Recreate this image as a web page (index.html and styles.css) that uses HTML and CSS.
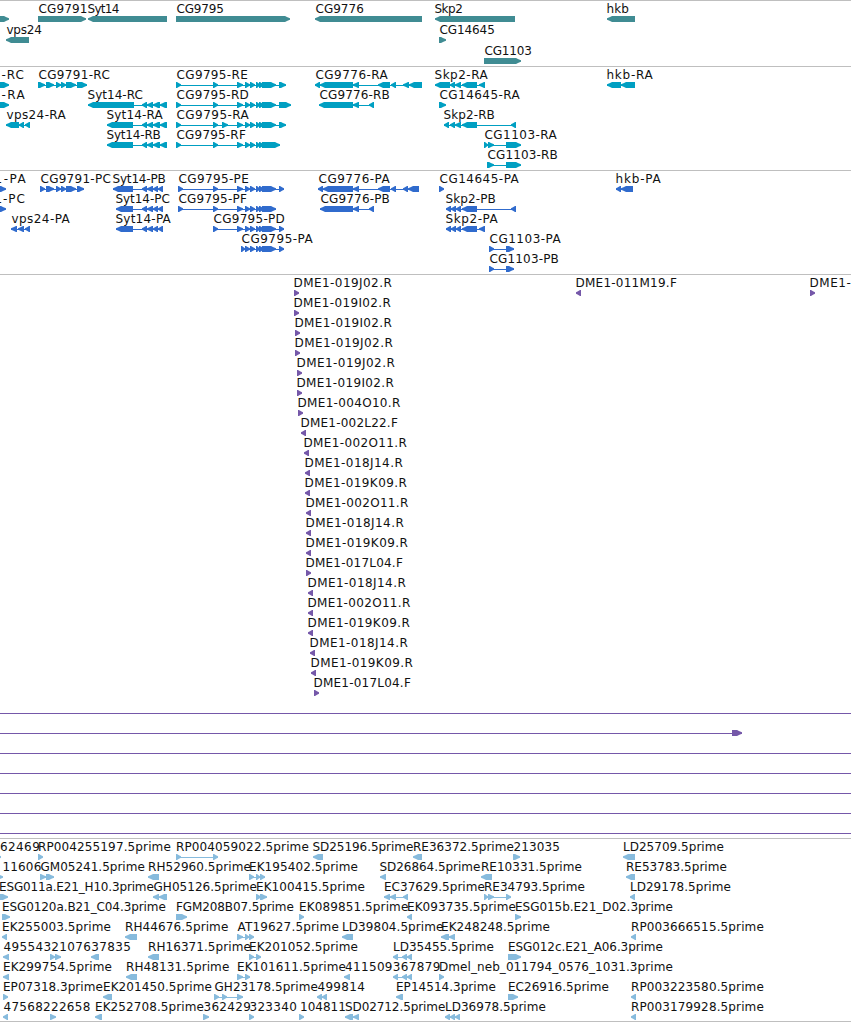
FILE: index.html
```html
<!DOCTYPE html>
<html lang="en">
<head>
    <meta charset="UTF-8">
    <title>Genome Browser</title>
    <link rel="stylesheet" href="styles.css">
</head>
<body>

    <div id="browser">
        <div class="track"><svg id="genes" class="genes" width="851" height="65"></svg></div>
        <div class="track"><svg id="transcripts" class="transcripts" width="851" height="103"></svg></div>
        <div class="track"><svg id="proteins" class="proteins" width="851" height="103"></svg></div>
        <div class="track"><svg id="clones" class="clones" width="851" height="563"></svg></div>
        <div class="track last"><svg id="ests" class="ests" width="851" height="182"></svg></div>
    </div>

    <script src="script.js"></script>
</body>
</html>
```
FILE: styles.css
```css
body { margin: 0; background: #fff; overflow: hidden; }
#browser { width: 851px; }
.track { border-top: 1px solid #bfbfbf; }
.track.last { border-bottom: 1px solid #bfbfbf; }
.track svg { display: block; overflow: hidden; }
.label { font-family: "DejaVu Sans", sans-serif; font-size: 12px; fill: #111; }
.genes { color: #408c93; }
.transcripts { color: #009fc2; }
.proteins { color: #306bcd; }
.clones { color: #7558a9; }
.ests { color: #87bbdd; }
.exon, .intron { fill: currentColor; }
```
FILE: script.js
```js
const NS = "http://www.w3.org/2000/svg";

// exon blocks shared by several isoforms
const cg9795 = "237-243 245-250 250-255 256-260 259-264 ";
const syt14 = " 142-147 147-153 153-160 160-167";
const syt14p = " 142-147 147-153 153-158 158-163";

// row, label, label start, label end, strand, blocks
const genes = [
    [0, "", 0, 0, "+", "-10-9"],
    [0, "CG9791", 38, 87.5, "+", "38-86"],
    [0, "Syt14", 87, 119.5, "-", "88-167"],
    [0, "CG9795", 176, 224, "+", "176-290"],
    [0, "CG9776", 315, 364, "-", "315-422"],
    [0, "Skp2", 434, 463, "-", "435-515"],
    [0, "hkb", 606, 629, "-", "607-635"],
    [1, "vps24", 6, 42, "-", "6-29"],
    [1, "CG14645", 439, 495, "+", "439-446"],
    [2, "CG1103", 484, 532, "+", "484-521"]
];

const transcripts = [
    [0, "-RC", 1, 24, "+", "-10-9"],
    [0, "CG9791-RC", 38, 110, "+", "38-45 46-54 56-61 61-66 66-76 77-87"],
    [0, "CG9795-RE", 176, 248, "+", "176-181 213-218 " + cg9795 + "262-276 279-286"],
    [0, "CG9776-RA", 315, 388, "-", "315-320 320-353 353-359 378-390 391-396 403-409 409-422"],
    [0, "Skp2-RA", 434, 488, "-", "435-450 450-455 455-461 462-477 479-485"],
    [0, "hkb-RA", 606, 653, "-", "607-621 621-635"],
    [1, "-RA", 1, 25, "+", "-10-9"],
    [1, "Syt14-RC", 87, 143, "-", "88-134" + syt14],
    [1, "CG9795-RD", 176, 249, "+", "176-181 213-218 " + cg9795 + "262-276 279-291"],
    [1, "CG9776-RB", 319, 390, "-", "319-353 353-359 369-374"],
    [1, "CG14645-RA", 439, 520, "+", "439-446"],
    [2, "vps24-RA", 6, 66, "-", "6-19 19-24 25-30"],
    [2, "Syt14-RA", 106, 163, "-", "107-133" + syt14],
    [2, "CG9795-RA", 176, 249, "+", "176-181 213-218 222-228 " + cg9795 + "262-276 279-286"],
    [2, "Skp2-RB", 443, 495, "-", "444-449 450-455 455-461 462-477 511-516"],
    [3, "Syt14-RB", 106, 161, "-", "107-133" + syt14],
    [3, "CG9795-RF", 176, 246, "+", "176-181 213-218 " + cg9795 + "262-280"],
    [3, "CG1103-RA", 484, 557, "+", "484-488 488-494 506-521"],
    [4, "CG1103-RB", 487, 558, "+", "487-494 506-521"]
];

const proteins = [
    [0, "1-PA", -6, 26, "+", "-10-6"],
    [0, "CG9791-PC", 40, 111, "+", "40-45 46-54 56-61 61-66 66-76 77-84"],
    [0, "Syt14-PB", 112, 166, "-", "113-133" + syt14p],
    [0, "CG9795-PE", 178, 249, "+", "178-183 213-218 " + cg9795 + "262-276 279-284"],
    [0, "CG9776-PA", 318, 390, "-", "318-323 323-353 353-359 378-390 391-396 403-408 408-419"],
    [0, "CG14645-PA", 439, 519, "+", "439-444"],
    [0, "hkb-PA", 615, 661, "-", "616-621 621-633"],
    [1, "1-PC", -6, 25, "+", "-10-6"],
    [1, "Syt14-PC", 115, 170, "-", "116-133" + syt14p],
    [1, "CG9795-PF", 178, 247, "+", "178-183 213-218 " + cg9795 + "262-276"],
    [1, "CG9776-PB", 320, 390, "-", "320-353 353-359 369-374"],
    [1, "Skp2-PB", 445, 496, "-", "446-451 451-456 456-461 462-477 511-516"],
    [2, "vps24-PA", 11, 70, "-", "11-17 18-24 25-30"],
    [2, "Syt14-PA", 115, 171, "-", "116-133" + syt14p],
    [2, "CG9795-PD", 213, 285, "+", "213-218 " + cg9795 + "262-276 279-284"],
    [2, "Skp2-PA", 445, 498, "-", "446-451 451-456 456-461 462-477 479-485"],
    [3, "CG9795-PA", 241, 313, "+", "241-245 245-250 250-255 256-260 259-264 262-276 279-284"],
    [3, "CG1103-PA", 489, 561, "+", "489-494 506-514"],
    [4, "CG1103-PB", 489, 559, "+", "489-494 506-514"]
];

const clones = [
    [0, "DME1-019J02.R", 293, 392, "+", "294-299"],
    [0, "DME1-011M19.F", 575, 677, "-", "576-581"],
    [0, "DME1-", 809, 851, "+", "810-815"],
    [1, "DME1-019I02.R", 293, 391, "+", "294-299"],
    [2, "DME1-019I02.R", 294, 392, "+", "295-300"],
    [3, "DME1-019J02.R", 294, 393, "+", "295-300"],
    [4, "DME1-019J02.R", 296, 395, "+", "297-302"],
    [5, "DME1-019I02.R", 296, 394, "+", "297-302"],
    [6, "DME1-004O10.R", 297, 400.5, "+", "298-303"],
    [7, "DME1-002L22.F", 300, 398, "-", "301-306"],
    [8, "DME1-002O11.R", 303, 407, "-", "304-309"],
    [9, "DME1-018J14.R", 304, 403, "-", "305-310"],
    [10, "DME1-019K09.R", 304, 407, "-", "305-310"],
    [11, "DME1-002O11.R", 305, 408.5, "-", "306-311"],
    [12, "DME1-018J14.R", 305, 404, "-", "306-311"],
    [13, "DME1-019K09.R", 305, 408, "-", "306-311"],
    [14, "DME1-017L04.F", 305, 403, "+", "306-311"],
    [15, "DME1-018J14.R", 307, 406, "-", "308-313"],
    [16, "DME1-002O11.R", 307, 410.5, "-", "308-313"],
    [17, "DME1-019K09.R", 307, 410, "-", "308-313"],
    [18, "DME1-018J14.R", 309, 408, "-", "310-315"],
    [19, "DME1-019K09.R", 310, 413, "-", "311-316"],
    [20, "DME1-017L04.F", 313, 411, "+", "314-319"],
    [21, "", 0, 0, "+", "-10--5 860-870"],
    [22, "", 0, 0, "+", "-10--5 732-742"],
    [23, "", 0, 0, "+", "-10--5 860-870"],
    [24, "", 0, 0, "+", "-10--5 860-870"],
    [25, "", 0, 0, "+", "-10--5 860-870"],
    [26, "", 0, 0, "+", "-10--5 860-870"],
    [27, "", 0, 0, "+", "-10--5 860-870"]
];

const ests = [
    [0, "62469", -0.5, 40, "+", "-4-1"],
    [0, "RP004255197.5prime", 37.5, 171, "+", "38-43"],
    [0, "RP004059022.5prime", 175.5, 309, "+", "176-181 213-218"],
    [0, "SD25196.5prime", 312, 413.5, "-", "313-323"],
    [0, "RE36372.5prime", 412.5, 514, "-", "413-422"],
    [0, "213035", 513, 560, "+", "513-520"],
    [0, "LD25709.5prime", 622.5, 724, "-", "623-635"],
    [1, "11606", 2, 41.5, "+", "-4-3"],
    [1, "GM05241.5prime", 40, 145, "+", "40-46 46-54"],
    [1, "RH52960.5prime", 147.5, 251, "-", "148-159"],
    [1, "EK195402.5prime", 248.5, 358, "+", "249-254 256-260 260-265"],
    [1, "SD26864.5prime", 379, 480.5, "-", "380-386"],
    [1, "RE10331.5prime", 480.5, 582, "-", "481-492"],
    [1, "RE53783.5prime", 625.5, 727, "-", "626-635"],
    [2, "ESG011a.E21_H10.3prime", -1.5, 154, "+", "-4-8"],
    [2, "GH05126.5prime", 153, 257, "-", "153-159 159-167"],
    [2, "EK100415.5prime", 255.5, 365, "+", "256-261 260-267"],
    [2, "EC37629.5prime", 383.5, 485, "-", "384-390 390-396 403-408"],
    [2, "RE34793.5prime", 483.5, 585, "+", "484-488 488-494 506-511"],
    [2, "LD29178.5prime", 629.5, 731, "-", "630-635"],
    [3, "ESG0120a.B21_C04.3prime", 1.5, 166, "+", "2-10"],
    [3, "FGM208B07.5prime", 175.5, 294, "+", "176-187"],
    [3, "EK089851.5prime", 298.5, 408.5, "+", "299-304"],
    [3, "EK093735.5prime", 406.5, 516, "-", "407-412"],
    [3, "ESG015b.E21_D02.3prime", 514.5, 673, "+", "515-521"],
    [4, "EK255003.5prime", 1.5, 111, "-", "2-7"],
    [4, "RH44676.5prime", 124.5, 228.5, "-", "125-137"],
    [4, "AT19627.5prime", 237, 339, "+", "237-243 245-249 249-254"],
    [4, "LD39804.5prime", 341.5, 443.5, "-", "342-353"],
    [4, "EK248248.5prime", 440.5, 550, "-", "441-449 449-455"],
    [4, "RP003666515.5prime", 630.5, 764, "-", "631-636"],
    [5, "4955432107637835", 3, 131, "-", "3-9"],
    [5, "", 0, 0, "+", "50-55 55-61"],
    [5, "", 0, 0, "-", "91-99"],
    [5, "RH16371.5prime", 147.5, 251, "-", "148-159"],
    [5, "EK201052.5prime", 248.5, 358, "+", "249-254 256-261"],
    [5, "LD35455.5prime", 392.5, 494, "-", "393-398 402-407 407-412"],
    [5, "ESG012c.E21_A06.3prime", 507.5, 663, "+", "508-521"],
    [6, "EK299754.5prime", 2.5, 112, "-", "3-9"],
    [6, "RH48131.5prime", 125.5, 229.5, "-", "126-137"],
    [6, "EK101611.5prime", 236.5, 346, "+", "237-243 245-250"],
    [6, "411509367879", 344.5, 440.5, "-", "344-350"],
    [6, "", 0, 0, "-", "393-398 402-407 407-412"],
    [6, "Dmel_neb_011794_0576_1031.3prime", 438.5, 673, "+", "439-444"],
    [7, "EP07318.3prime", 2.5, 103, "+", "3-8"],
    [7, "EK201450.5prime", 102.5, 212, "-", "103-112"],
    [7, "GH23178.5prime", 214, 318, "+", "214-219 222-227 237-243"],
    [7, "499814", 317, 365, "-", "317-322 322-327"],
    [7, "EP14514.3prime", 395.5, 496, "-", "396-403"],
    [7, "EC26916.5prime", 507.5, 609, "+", "508-518"],
    [7, "RP003223580.5prime", 630.5, 764, "-", "631-636"],
    [8, "47568222658", 3, 90.5, "-", "3-8"],
    [8, "", 0, 0, "+", "50-56"],
    [8, "EK252708.5prime", 94.5, 204, "-", "95-102"],
    [8, "362429", 203, 251, "+", "203-209"],
    [8, "323340", 249, 297, "+", "249-254"],
    [8, "104811", 299.5, 346, "+", "299-304"],
    [8, "SD02712.5prime", 344.5, 445.5, "-", "345-353 353-359"],
    [8, "LD36978.5prime", 444.5, 546, "-", "445-450 450-455 455-460"],
    [8, "RP003179928.5prime", 630.5, 764, "-", "631-636"]
];

function add(svg, name, attrs) {
    const el = document.createElementNS(NS, name);
    for (const key in attrs) el.setAttribute(key, attrs[key]);
    svg.appendChild(el);
    return el;
}

function drawTrack(id, features, rowHeight) {
    const svg = document.getElementById(id);
    for (const [row, label, x, end, strand, blocks] of features) {
        const y = row * rowHeight;
        const spans = blocks.split(" ").map(b => b.match(/^(-?\d+)-(-?\d+)$/).slice(1).map(Number));
        const first = spans[0][0];
        const last = spans[spans.length - 1][1];

        if (spans.length > 1) {
            add(svg, "rect", { class: "intron", x: first, y: y + 18, width: last - first, height: 1 });
        }
        for (const [a, b] of spans) {
            // tip and tail swap sides on the minus strand
            const tip = strand === "+" ? b : a;
            const tail = strand === "+" ? a : b;
            const dir = strand === "+" ? -1 : 1;
            const head = dir * Math.min(5, b - a - 1);
            const d = `M${tail} ${y + 15}H${tip + head}L${tip + head / 2} ${y + 16.2}` +
                `L${tip} ${y + 17.3}V${y + 18.7}L${tip + head / 2} ${y + 19.8}L${tip + head} ${y + 21}H${tail}Z`;
            add(svg, "path", { class: "exon", d: d });
        }
        if (label) {
            const text = add(svg, "text", { class: "label", x: x + 0.5, y: y + 12, textLength: end - x - 0.7 });
            text.textContent = label;
        }
    }
}

drawTrack("genes", genes, 21);
drawTrack("transcripts", transcripts, 20);
drawTrack("proteins", proteins, 20);
drawTrack("clones", clones, 20);
drawTrack("ests", ests, 20);
```
